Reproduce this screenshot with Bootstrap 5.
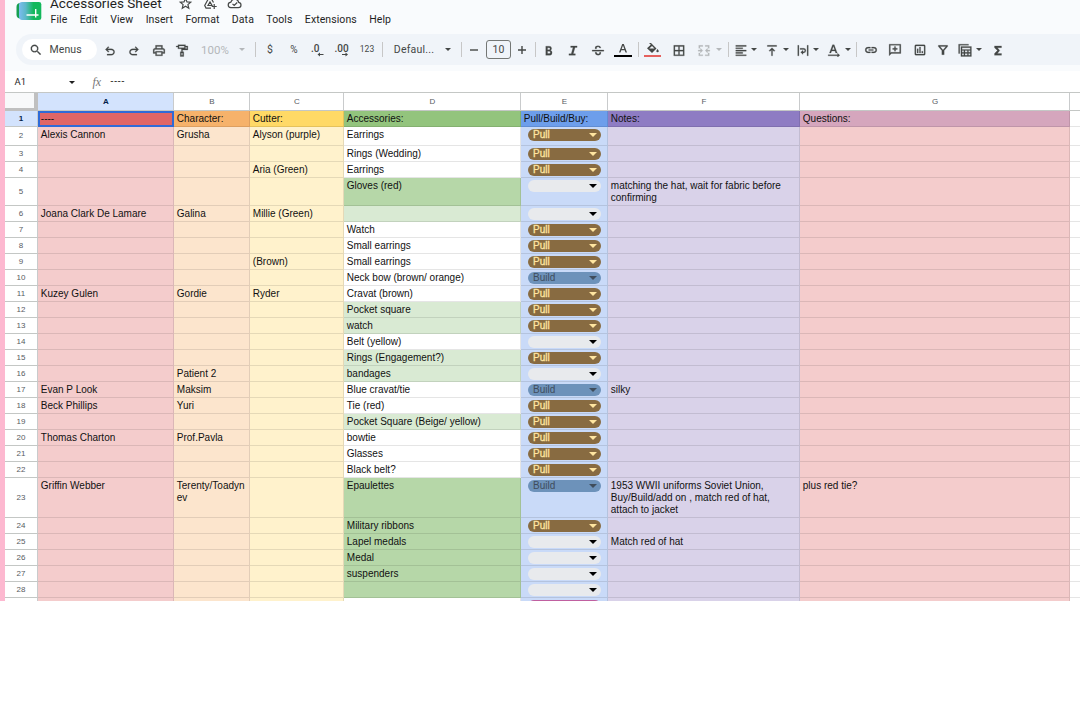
<!DOCTYPE html>
<html lang="en">
<head>
<meta charset="utf-8">
<meta name="viewport" content="width=device-width, initial-scale=1">
<title>Accessories Sheet</title>
<link href="https://cdn.jsdelivr.net/npm/bootstrap@5.3.0/dist/css/bootstrap.min.css" rel="stylesheet">
<style>
body{font-family:"Liberation Sans",Arial,sans-serif;background:#fff;overflow:hidden}
.app{height:601px;border-left:5px solid #fdb8d0;background:#f9fbfd}
.masthead{height:34px;padding-left:11px}
.ui{font-family:Roboto,"Liberation Sans",sans-serif;color:#1f1f1f}
.doc-title{font-size:13.5px;line-height:16px;letter-spacing:.02px;margin-top:-5px;height:16px;width:111px;white-space:nowrap}
.menus{font-size:10.5px;line-height:14px;gap:12.400px;letter-spacing:.08px;margin-top:1.500px;margin-left:.5px}
.tools{height:31px;margin:0 0 6px 11px;border-radius:16px 0 0 16px;background:#f0f4f9;padding-left:6px;color:#444746;font-size:10.5px}
.search-pill{width:75px;height:21px;border-radius:11px;background:#fff;padding-left:7px;gap:6.500px;font-size:10.5px;letter-spacing:.1px}
.toolgrid{display:grid;align-items:center;justify-items:center;height:31px;
 grid-template-columns:26px 22px 27px 19px 48px 6px 21px 8px 40px 7px 42px 8px 23px 40px 27px 1px 24px 25px 22px 5px 22px 26px 23px 27px 5px 24px 27px 35px 2px 33px 30px 31px 32px 3px 26px 21px 29px 18px 36px 20px}
.toolgrid>*{flex:none}
.toolgrid svg,.search-pill svg,.pair svg{width:14px;height:14px;fill:currentColor;display:block;flex:none}
.search-pill svg,.toolgrid svg{stroke:currentColor;stroke-width:.4}
.toolgrid svg[viewBox="0 0 14 14"],.toolgrid svg[viewBox="0 0 18 14"]{stroke:none}
.divider{width:1px;height:15px;background:#c7c7c7}
.caret{width:0;height:0;border:3.5px solid transparent;border-top-color:currentColor;border-bottom:0;flex:none}
.chip .caret{border-width:4px 4px 0}
.pair{gap:3.5px}
.dim{color:#b4b7ba}
.sizebox{width:25px;height:19px;border:1px solid #747775;border-radius:3px;font-size:10.5px;line-height:17px}
.formula{height:21px;background:#fff;font-size:10px;padding-top:1px}
.sheet-row{display:grid;grid-template-columns:33px 136px 76px 94px 177px 87px 192px 270px 1fr}
.col-head{height:18px;font-size:8px;line-height:18px;color:#575b5f;text-align:center;background:#fff;border-right:1px solid #c9cbcc;border-bottom:1px solid #c4c7c5;padding-left:1px}
.sheet-row>:last-child{border-right:0}
.heads{border-top:1px solid #c4c7c5;height:19px}
.picked{background:#d3e3fd;color:#041e49;font-weight:700}
.corner{background:#f8f9fa;border-right:4px solid #c0c0c0;border-bottom:3px solid #c0c0c0;height:18px}
.row-num{font-size:8px;color:#575b5f;background:#fff;border-right:1px solid #c9cbcc;border-bottom:1px solid #c4c7c5}
.row-num.picked{background:#d3e3fd;color:#041e49}
.cell{font-size:10px;line-height:12px;color:#111;padding:2px 0 0 2.8px;border-right:1px solid rgba(0,0,0,.1);border-bottom:1px solid rgba(0,0,0,.1);overflow:hidden;white-space:pre-line}
.chip{width:73.5px;height:12px;margin:-.2px 0 0 4.2px;border-radius:6px;padding:0 4px 0 5px;line-height:12px;background:#e8eaed;color:#000}
.chip-pull{background:#886b41;color:#ffe5a0;-webkit-text-stroke:.3px #ffe5a0}
.chip-build{background:#6d92ba;color:#3f4d5c}
.chip-buy{background:#c060a0}
.active-cell{outline:2px solid #2f6bd8;outline-offset:-2px}
</style>
</head>
<body>
<div class="app d-flex flex-column overflow-hidden">
 <header class="masthead d-flex ui flex-shrink-0">
  <svg class="flex-shrink-0" width="26" height="22" viewBox="0 0 26 22"><defs><linearGradient id="lg"><stop offset="0" stop-color="#7cbcf0"/><stop offset=".3" stop-color="#5cb8c8"/><stop offset=".65" stop-color="#12b85c"/></linearGradient></defs><rect x=".5" y="3" width="19" height="15.500" rx="4" fill="#15a050"/><path d="M6 2h17q2.300 0 2.300 2.300V18q0 2-2.300 2H6q-3 0-3-4V5q0-3 3-3z" fill="url(#lg)"/><path d="M10.500 15H22.500M19.700 9v8.500" stroke="#fff" stroke-width="1.400" fill="none"/></svg>
  <div style="margin-left:8px">
   <div class="d-flex">
    <div class="doc-title">Accessories Sheet</div>
    <svg width="82" height="11" viewBox="0 0 82 11" fill="none" stroke="#444746" stroke-width="1.200" style="margin-left:15px"><path d="M9.500-1.500l1.500 3.400 3.700.3-2.800 2.400.9 3.600-3.300-1.900-3.200 1.900.8-3.600L4.300 2.200 8 1.900z"/><path d="M37.500 2.500L35-2h-2.200L28.700 5.500l1.300 2.600h5M32 5.500h4L34 2zM38.200 4v5M35.700 6.500h5"/><path d="M54.800 7.700q-2.600-.4-2.600-2.800 0-2.300 2.600-2.700Q56-.8 58.700-.8q3.200 0 4 3.200 2.300.4 2.300 2.700 0 2.600-2.700 2.600H54.800M56.500 3.800L58.200 5.500l3-3"/></svg>
   </div>
   <nav class="menus d-flex"><span>File</span><span>Edit</span><span>View</span><span>Insert</span><span>Format</span><span>Data</span><span>Tools</span><span>Extensions</span><span>Help</span></nav>
  </div>
 </header>
 <div class="tools ui d-flex align-items-center flex-shrink-0">
  <div class="search-pill d-flex align-items-center flex-shrink-0"><svg viewBox="0 0 24 24"><path d="M15.500 14h-.8l-.3-.3A6.500 6.500 0 1 0 13.700 14.400l.3.300v.8l5 5 1.500-1.500zm-6 0a4.500 4.500 0 1 1 0-9 4.500 4.500 0 0 1 0 9z"/></svg><span>Menus</span></div>
  <div class="toolgrid">
   <svg viewBox="0 -2 24 24"><path d="M7 19v-2h7.100q1.600 0 2.700-1t1.200-2.500-1.200-2.500-2.700-1H7.800l2.600 2.600L9 14 4 9l5-5 1.400 1.400L7.800 8h6.300q2.400 0 4.200 1.600T20 13.500t-1.700 3.900T14.100 19z"/></svg>
   <svg viewBox="0 -2 24 24"><path d="M9.900 19q-2.400 0-4.200-1.600T4 13.500t1.700-3.900T9.900 8h6.300l-2.600-2.600L15 4l5 5-5 5-1.400-1.400 2.600-2.600H9.900q-1.600 0-2.700 1T6 13.500 7.200 16t2.700 1H17v2z"/></svg>
   <svg viewBox="0 -1 24 24"><path d="M19 8h-1V3H6v5H5c-1.700 0-3 1.300-3 3v6h4v4h12v-4h4v-6c0-1.700-1.300-3-3-3zM8 5h8v3H8zm8 14H8v-4h8zm2-4v-2H6v2H4v-4c0-.6.5-1 1-1h14c.6 0 1 .5 1 1v4z"/></svg>
   <svg viewBox="0 -1 24 24"><path d="M5 2h13v2h4v7h-9v3h2v8H9v-8h2V9h9V6h-2v3H5V6H2V4h3zm2 2v3h9V4zm4 12v4h2v-4z"/></svg>
   <span class="dim" style="font-size:11.500px;padding-top:2px">100%</span><i class="caret dim"></i><i class="divider"></i>
   <span>$</span><span style="font-size:10px">%</span>
   <svg viewBox="0 0 14 14" style="overflow:visible"><text x="0" y="9" font-size="10" font-weight="500">.0</text><path d="M6.500 11.500l2.500-2v1.400h3.500v1.200H9v1.400z"/></svg>
   <svg viewBox="0 0 14 14" style="overflow:visible"><text x="-.5" y="9" font-size="10" font-weight="500">.00</text><path d="M13 11.500l-2.500-2v1.400H7v1.200h3.500v1.400z"/></svg>
   <span style="font-size:8.500px">123</span><i class="divider"></i><span style="letter-spacing:.2px">Defaul...</span><i class="caret"></i><i class="divider"></i>
   <svg viewBox="0 0 14 14"><path d="M3 6.300h8v1.400H3z"/></svg><span class="sizebox text-center">10</span><svg viewBox="0 0 14 14"><path d="M3 6.300h3.300V3h1.400v3.300H11v1.400H7.700V11H6.300V7.700H3z"/></svg><i class="divider"></i>
   <svg viewBox="0 -1 24 24"><path d="M6.500 4.500h6q4 0 4 3.800 0 2.200-1.900 3.300 2.700 1 2.700 4 0 4.400-4.600 4.400H6.500zm3 2.700v3.400h2.700q1.600 0 1.600-1.700t-1.700-1.700zm0 6v4h3q1.800 0 1.800-2t-1.900-2z"/></svg>
   <svg viewBox="0 -1 24 24"><path d="M5 20v-2.500h4L12 6.500H8V4h11v2.500h-3.500l-3 11H16V20z"/></svg>
   <svg viewBox="0 -1 24 24"><path d="M2 11h20v2H2zM7 9q-.8-5.500 5-5.500 4.500 0 5 4h-2.400q-.5-2-2.600-2Q9 5.500 9.500 9zM7 15h2.400q.5 3 2.800 3 3 0 2.500-3h2.400q.3 5-5 5Q7.200 20 7 15z"/></svg>
   <svg viewBox="0 0 18 14" style="width:18px"><path d="M8.200 1h1.600l3.200 8.500h-1.500l-.8-2.200H7.300l-.8 2.200H5zM9 2.600L7.700 6.100h2.600z"/><path fill="#000" d="M0 12h18v2H0z"/></svg><i class="divider"></i>
   <svg viewBox="0 0 18 14" style="width:18px"><path d="M5 0l1-1 6.500 6.500L8 10 3 5.300l3.800-3.600zM8 3L5.300 5.500h5.200zM13.500 6q2.500 3 0 3.300-2.300-.3 0-3.300z"/><path fill="#e5605d" d="M0 12h17v2H0z"/></svg>
   <svg viewBox="0 -1 24 24"><path d="M3 3v18h18V3zm8 16H5v-6h6zm0-8H5V5h6zm8 8h-6v-6h6zm0-8h-6V5h6z"/></svg>
   <span class="pair dim d-flex align-items-center"><svg viewBox="0 -1 24 24" style="margin-right:2px"><path d="M3 3h7v2H5v3H3zm11 0h7v5h-2V5h-5zM3 16h2v3h5v2H3zm16 0h2v5h-7v-2h5zM2 11h4V8l4 4-4 4v-3H2zm20 0v2h-4v3l-4-4 4-4v3z"/></svg><i class="caret"></i></span><i class="divider"></i>
   <span class="pair d-flex align-items-center"><svg viewBox="0 -1 24 24"><path d="M3 3h18v2H3zm0 4h12v2H3zm0 4h18v2H3zm0 4h12v2H3zm0 4h18v2H3z"/></svg><i class="caret"></i></span>
   <span class="pair d-flex align-items-center"><svg viewBox="0 -1 24 24"><path d="M4 3h16v2H4zm7 18V10.800l-2.600 2.600L7 12l5-5 5 5-1.400 1.400-2.600-2.600V21z"/></svg><i class="caret"></i></span>
   <span class="pair d-flex align-items-center"><svg viewBox="0 -1 24 24"><path d="M3 3h2v18H3zm16 0h2v18h-2zM7 8h6q4 0 4 4t-4 4h-1v2.500L8 15l4-3.500V14h1q2 0 2-2t-2-2H7z"/></svg><i class="caret"></i></span>
   <span class="pair d-flex align-items-center"><svg viewBox="0 -1 24 24"><path d="M9.500 2h2.800l5.200 14h-2.600l-1.100-3.300H8L6.800 16H4.200zM11 4.700l-2.200 6h4.300zM2 19h16v-2.500l4 3.500-4 3.500V21H2z"/></svg><i class="caret"></i></span><i class="divider"></i>
   <svg viewBox="0 0 24 24"><path d="M11 17H7q-5-.3-5-5t5-5h4v2H7q-3 .2-3 3t3 3h4zm-3-4v-2h8v2zm5 4v-2h4q3-.2 3-3t-3-3h-4V7h4q5 .3 5 5t-5 5z"/></svg>
   <svg viewBox="0 0 24 24"><path d="M2 2h20v16H6l-4 4zm2 2v13l1-1h15V4zm7 2h2v3h3v2h-3v3h-2v-3H8V9h3z"/></svg>
   <svg viewBox="0 0 24 24"><path fill-rule="evenodd" d="M5 3h14q2 0 2 2v14q0 2-2 2H5q-2 0-2-2V5q0-2 2-2zm0 2v14h14V5zM7 10h2v7H7zm4-3h2v10h-2zm4 7h2v3h-2z"/></svg>
   <svg viewBox="0 0 24 24"><path fill-rule="evenodd" d="M4 4h16v2l-6 7v7h-4v-7L4 6zm3 2l5 6 5-6z"/></svg>
   <span class="pair d-flex align-items-center"><svg viewBox="0 -1 24 24"><path fill-rule="evenodd" d="M1 1h17v2H3v14H1zM5 5h18v17H5zM7 7v3h14V7zm0 5v3h3v-3zm5 0v3h4v-3zm6 0v3h3v-3zM7 17v3h3v-3zm5 0v3h4v-3zm6 0v3h3v-3z"/></svg><i class="caret"></i></span>
   <svg viewBox="0 -1 24 24"><path d="M6 4h12v3h-7l4 5-4 5h7v3H6v-3l5-5-5-5z"/></svg>
  </div>
 </div>
 <div class="formula ui d-flex align-items-center flex-shrink-0">
  <span style="width:63.500px;padding-left:9.500px;font-size:9.500px">A1</span><i class="caret"></i><span style="margin-left:18px;width:18px;font:italic 12px 'Liberation Serif',serif;color:#777">fx</span><span style="letter-spacing:.9px;margin-top:-2px">----</span>
 </div>
 <main id="sheet" class="flex-grow-1 overflow-hidden bg-white"></main>
</div>
<script>
// Each row: height, then columns A to G, then an optional fill for column D
const heads = ['A','B','C','D','E','F','G'];
const light = ['#f4cccc','#fce5cd','#fff2cc','#ffffff','#c9daf8','#d9d2e9','#f4cccc'];
const top1 = ['#e06666','#f6b26b','#ffd966','#93c47d','#6d9eeb','#8e7cc3','#d5a6bd'];
const G = '#b6d7a8', g = '#d9ead3';
const rows = [
 [16,'----','Character:','Cutter:','Accessories:','Pull/Build/Buy:','Notes:','Questions:'],
 [19,'Alexis Cannon','Grusha','Alyson (purple)','Earrings','Pull'],
 [16,'','','','Rings (Wedding)','Pull'],
 [16,'','','Aria (Green)','Earrings','Pull'],
 [28,'','','','Gloves (red)','','matching the hat, wait for fabric before\nconfirming','',G],
 [16,'Joana Clark De Lamare','Galina','Millie (Green)','','','','',g],
 [16,'','','','Watch','Pull'],
 [16,'','','','Small earrings','Pull'],
 [16,'','','(Brown)','Small earrings','Pull'],
 [16,'','','','Neck bow (brown/ orange)','Build'],
 [16,'Kuzey Gulen','Gordie','Ryder','Cravat (brown)','Pull'],
 [16,'','','','Pocket square','Pull','','',g],
 [16,'','','','watch','Pull','','',g],
 [16,'','','','Belt (yellow)',''],
 [16,'','','','Rings (Engagement?)','Pull','','',g],
 [16,'','Patient 2','','bandages','','','',g],
 [16,'Evan P Look','Maksim','','Blue cravat/tie','Build','silky'],
 [16,'Beck Phillips','Yuri','','Tie (red)','Pull'],
 [16,'','','','Pocket Square (Beige/ yellow)','Pull','','',g],
 [16,'Thomas Charton','Prof.Pavla','','bowtie','Pull'],
 [16,'','','','Glasses','Pull'],
 [16,'','','','Black belt?','Pull'],
 [40,'Griffin Webber','Terenty/Toadyn\nev','','Epaulettes','Build','1953 WWII uniforms Soviet Union,\nBuy/Build/add on , match red of hat,\nattach to jacket','plus red tie?',G],
 [16,'','','','Military ribbons','Pull','','',G],
 [16,'','','','Lapel medals','','Match red of hat','',G],
 [16,'','','','Medal','','','',G],
 [16,'','','','suspenders','','','',G],
 [16,'','','','','','','',G],
 [16,'','','','','Buy']
];
let html = '<div class="sheet-row heads"><div class="corner"></div>' +
 heads.map((h, i) => `<div class="col-head${i ? '' : ' picked'}">${h}</div>`).join('') + '<div class="col-head"></div></div>';
rows.forEach((r, n) => {
 html += `<div class="sheet-row" style="height:${r[0]}px"><div class="row-num d-flex align-items-center justify-content-center${n ? '' : ' picked fw-bold'}">${n < 28 ? n + 1 : ''}</div>`;
 for (let c = 0; c < 7; c++) {
  const t = r[c + 1] || '';
  let bg = n ? light[c] : top1[c];
  if (c === 3 && r[8]) bg = r[8];
  let body = t;
  if (c === 4 && n) body = `<div class="chip chip-${t.toLowerCase()} d-flex align-items-center justify-content-between"><span>${t === 'Buy' ? '' : t}</span><i class="caret"></i></div>`;
  html += `<div class="cell${!n && !c ? ' active-cell' : ''}" style="background-color:${bg}">${body}</div>`;
 }
 html += '<div class="cell"></div></div>';
});
document.getElementById('sheet').innerHTML = html;
</script>
<script src="https://cdn.jsdelivr.net/npm/bootstrap@5.3.0/dist/js/bootstrap.bundle.min.js"></script>
</body>
</html>
